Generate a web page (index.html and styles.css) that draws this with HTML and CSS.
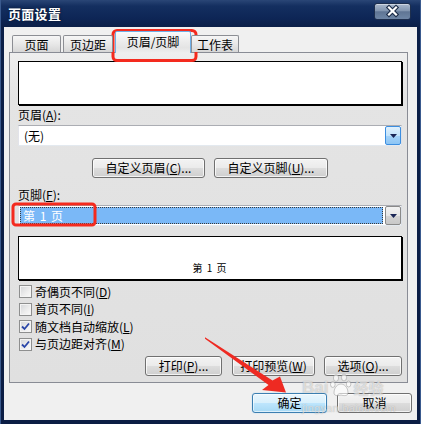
FILE: index.html
```html
<!DOCTYPE html>
<html lang="zh-CN">
<head>
<meta charset="utf-8">
<title>页面设置</title>
<link rel="stylesheet" href="styles.css">
</head>
<body>
<div class="window">
  <div class="titlebar">
    <span class="title">页面设置</span>
    <div class="close">
      <svg width="37" height="17" viewBox="0 0 37 17">
        <path d="M15 4.5 L22 11.5 M22 4.5 L15 11.5" stroke="#1b2b46" stroke-width="4.4" stroke-linecap="square" fill="none"/>
        <path d="M15 4.5 L22 11.5 M22 4.5 L15 11.5" stroke="#ffffff" stroke-width="2.2" stroke-linecap="square" fill="none"/>
      </svg>
    </div>
  </div>
  <div class="client">
    <div class="tabs">
      <div class="tab tab-1">页面</div>
      <div class="tab tab-2">页边距</div>
      <div class="tab tab-active">页眉/页脚</div>
      <div class="tab tab-4">工作表</div>
    </div>
    <div class="panel">
      <div class="preview"></div>
      <div class="label">页眉(<u>A</u>):</div>
      <div class="combo">
        <div class="combo-value">(无)</div>
        <div class="drop drop-hot">
          <svg width="7" height="4" viewBox="0 0 7 4"><path d="M0 0 H7 L3.5 4 Z" fill="#1a2656"/></svg>
        </div>
      </div>
      <div class="row-center">
        <button class="btn btn-custom-h">自定义页眉(<u>C</u>)...</button>
        <button class="btn btn-custom-f">自定义页脚(<u>U</u>)...</button>
      </div>
      <div class="label label-footer">页脚(<u>F</u>):</div>
      <div class="combo">
        <div class="combo-value combo-selected">第 1 页</div>
        <div class="drop">
          <svg width="7" height="4" viewBox="0 0 7 4"><path d="M0 0 H7 L3.5 4 Z" fill="#1a2656"/></svg>
        </div>
      </div>
      <div class="preview preview-footer"><span class="preview-text">第 1 页</span></div>
      <ul class="checks">
        <li class="check"><span class="box"></span><span>奇偶页不同(<u>D</u>)</span></li>
        <li class="check"><span class="box"></span><span>首页不同(<u>I</u>)</span></li>
        <li class="check"><span class="box"><svg width="11" height="11" viewBox="0 0 11 11"><path d="M2 5.5 L4.5 8 L9 2.5" stroke="#2a46a8" stroke-width="1.8" fill="none"/></svg></span><span>随文档自动缩放(<u>L</u>)</span></li>
        <li class="check"><span class="box"><svg width="11" height="11" viewBox="0 0 11 11"><path d="M2 5.5 L4.5 8 L9 2.5" stroke="#2a46a8" stroke-width="1.8" fill="none"/></svg></span><span>与页边距对齐(<u>M</u>)</span></li>
      </ul>
      <div class="row-right">
        <button class="btn btn-print">打印(<u>P</u>)...</button>
        <button class="btn btn-preview">打印预览(<u>W</u>)</button>
        <button class="btn btn-options">选项(<u>O</u>)...</button>
      </div>
    </div>
    <div class="dialog-buttons">
      <button class="btn btn-default">确定</button>
      <button class="btn btn-cancel">取消</button>
    </div>
  </div>

  <div class="watermark">
    <div class="wm-logo">
      <span class="wm-bai">Bai</span>
      <svg class="wm-paw" width="22" height="24" viewBox="0 0 22 24">
        <g fill="rgba(255,255,255,0.6)" stroke="rgba(110,110,110,0.45)" stroke-width="0.8">
          <ellipse cx="6" cy="5" rx="2.6" ry="3.4"/>
          <ellipse cx="14" cy="4.5" rx="2.6" ry="3.4"/>
          <ellipse cx="2.8" cy="11.5" rx="2.3" ry="3"/>
          <ellipse cx="18.6" cy="11" rx="2.3" ry="3"/>
          <path d="M4 20 C4 14 8 11 11 11 C14 11 18 14 18 20 C18 23 14 23 11 22 C8 23 4 23 4 20 Z"/>
        </g>
      </svg>
      <span class="wm-jy">经验</span>
    </div>
    <div class="wm-url">jingyan.baidu.com</div>
  </div>

  <svg class="annotations" width="421" height="424" viewBox="0 0 421 424">
    <rect x="113" y="30.5" width="83" height="30" rx="4" fill="none" stroke="#f42a1e" stroke-width="3"/>
    <rect x="13" y="204" width="82" height="21" rx="3" fill="none" stroke="#f42a1e" stroke-width="3"/>
    <polygon points="205,337.3 272.5,380.5 280,376.5 286,392.5 262,390 268.5,385 205,338.8" fill="#ee2a22"/>
  </svg>
</div>
</body>
</html>
```

FILE: styles.css
```css
* {
  box-sizing: border-box;
}

html, body {
  margin: 0;
  padding: 0;
}

body {
  width: 421px;
  height: 424px;
  overflow: hidden;
  font-family: "Noto Sans CJK SC", "Noto Sans", sans-serif;
  font-size: 12px;
  color: #000;
  background: #0c1d44;
}

.window {
  position: relative;
  width: 421px;
  height: 424px;
  display: flex;
  flex-direction: column;
  padding: 0 4px 4px 4px;
  background: linear-gradient(to bottom, #2a4676 0px, #142f60 6px, #0e2656 18px, #0b1f48 27px, #0b1d44 100%);
  box-shadow: inset 1px 0 0 #3a5a8e, inset -1px 0 0 #3a5a8e;
}

/* Title bar */
.titlebar {
  height: 27px;
  flex: none;
  display: flex;
  align-items: center;
  justify-content: space-between;
  padding-left: 4px;
}

.title {
  color: #fff;
  font-weight: 700;
  font-size: 13px;
  line-height: 16px;
  letter-spacing: 0.3px;
  text-shadow: 0 0 3px rgba(0, 0, 0, 0.6);
}

.close {
  align-self: flex-start;
  margin-top: 3px;
  margin-right: 6px;
  width: 37px;
  height: 17px;
  border: 1px solid #1e2f4d;
  border-radius: 3px;
  background: linear-gradient(to bottom, #a9b8cc 0%, #8396b0 45%, #5f7594 52%, #6e86a6 100%);
  box-shadow: inset 0 1px 0 rgba(255, 255, 255, 0.45);
  position: relative;
  overflow: hidden;
}

.close svg {
  position: absolute;
  left: -1px;
  top: -1px;
}

/* Client area */
.client {
  flex: 1;
  display: flex;
  flex-direction: column;
  background: #f0f0f0;
}

.tabs {
  display: flex;
  align-items: flex-end;
  height: 26px;
  padding: 4px 0 0 8px;
  margin-bottom: -1px;
  position: relative;
  z-index: 1;
}

.tab {
  height: 17px;
  margin-bottom: 1px;
  margin-right: 2px;
  border: 1px solid #8c8e94;
  border-bottom: none;
  border-radius: 2px 2px 0 0;
  background: linear-gradient(to bottom, #f6f6f6 0%, #e8e8e8 50%, #d6d6d6 100%);
  display: flex;
  align-items: center;
  justify-content: center;
  font-size: 12px;
  line-height: 14px;
  padding-top: 1px;
}

.tab-1 { width: 49px; }
.tab-2 { width: 50px; }
.tab-4 { width: 48px; margin-right: 0; }

.tab-active {
  width: 76px;
  height: 22px;
  margin-bottom: 0;
  margin-right: 0;
  border-color: #6fb0e8;
  background: linear-gradient(to bottom, #fafafa 0%, #ececec 45%, #e4e4e4 75%, #eeeeee 100%);
  padding-bottom: 2px;
}

.panel {
  margin: 0 9px 0 5px;
  border: 1px solid #898c95;
  background: linear-gradient(to bottom, #eeeeee 0px, #e4e4e4 45px, #e0e0e0 100%);
  padding: 0 5px 6px 8px;
  display: flex;
  flex-direction: column;
}

.preview {
  margin-top: 8px;
  height: 44px;
  background: #fff;
  border: 1px solid #000;
  box-shadow: 1px 1px 0 #000;
}

.preview-footer {
  margin-top: 10px;
  display: flex;
  align-items: flex-end;
  justify-content: center;
  padding-bottom: 5px;
}

.preview-text {
  font-size: 10px;
  line-height: 12px;
  letter-spacing: 1px;
  white-space: pre;
}

.label {
  margin-top: 2px;
  height: 16px;
  line-height: 16px;
  padding-left: 0;
}

.label-footer {
  margin-top: 9px;
}

.combo {
  margin-top: 2px;
  height: 21px;
  border: 1px solid #abadb3;
  border-left-color: #e2e3ea;
  border-right-color: #dbdfe6;
  border-bottom-color: #e3e9ef;
  background: #fff;
  display: flex;
  align-items: stretch;
  padding: 0;
}

.combo-value {
  flex: 1;
  line-height: 19px;
  padding-left: 5px;
  white-space: pre;
}

.combo-selected {
  margin: 1px 2px 1px 1px;
  line-height: 15px;
  padding-left: 2px;
  color: #fff;
  background: #7ab8f7;
  border: 1px dotted #3a3a3a;
  letter-spacing: 1px;
}

.drop {
  width: 16px;
  flex: none;
  border: 1px solid #8a8a8a;
  border-radius: 2px;
  background: linear-gradient(to bottom, #f3f3f3 0%, #e6e6e6 50%, #d4d4d4 51%, #c8c8c8 100%);
  display: flex;
  align-items: center;
  justify-content: center;
}

.drop-hot {
  border-color: #3c8ee0;
  background: linear-gradient(to bottom, #e0f1fd 0%, #c4e4fb 50%, #a5d3f8 51%, #8cc5f5 100%);
}

.row-center {
  margin-top: 12px;
  display: flex;
  justify-content: center;
  gap: 9px;
}

.row-right {
  margin-top: 3px;
  display: flex;
  justify-content: flex-end;
  gap: 9px;
  padding-right: 0;
}

.btn {
  font-family: "Noto Sans CJK SC", "Noto Sans", sans-serif;
  font-size: 12px;
  line-height: 16px;
  color: #000;
  height: 20px;
  padding: 0;
  margin: 0;
  border: 1px solid #707070;
  border-radius: 3px;
  background: linear-gradient(to bottom, #f3f3f3 0%, #ebebeb 48%, #dddddd 50%, #cfcfcf 100%);
  box-shadow: inset 0 0 0 1px rgba(255, 255, 255, 0.75);
  white-space: nowrap;
}

.btn-custom-h { width: 113px; }
.btn-custom-f { width: 114px; }
.btn-print { width: 77px; margin-right: 1px; }
.btn-preview { width: 83px; }
.btn-options { width: 78px; }

.checks {
  list-style: none;
  margin: 3px 0 0 0;
  padding: 0;
}

.check {
  height: 17.5px;
  display: flex;
  align-items: center;
  gap: 3px;
  padding-left: 1px;
  line-height: 16px;
}

.box {
  width: 13px;
  height: 13px;
  flex: none;
  border: 1px solid #8e8f8f;
  background: linear-gradient(135deg, #d3d5d8 0%, #eeeeee 60%, #fafafa 100%);
  box-shadow: inset 0 0 0 1px #f4f4f4;
  display: flex;
  align-items: center;
  justify-content: center;
}

.dialog-buttons {
  margin-top: 10px;
  display: flex;
  justify-content: flex-end;
  gap: 10px;
  padding-right: 5px;
}

.dialog-buttons .btn {
  width: 75px;
}

.btn-default {
  border-color: #3c7fb1;
  background: linear-gradient(to bottom, #eaf6fd 0%, #d9f0fc 48%, #bee6fd 50%, #a7d9f5 100%);
  box-shadow: inset 0 0 0 1px rgba(255, 255, 255, 0.6), 0 0 1px #7fbfef;
}

/* Overlays */
.watermark {
  position: absolute;
  left: 302px;
  top: 371px;
  pointer-events: none;
  color: rgba(255, 255, 255, 0.6);
  text-shadow: 0 0 1px rgba(100, 100, 100, 0.55);
}

.wm-logo {
  display: flex;
  align-items: flex-end;
  height: 26px;
}

.wm-bai {
  font-family: "Liberation Sans", sans-serif;
  font-weight: 700;
  font-size: 17px;
  line-height: 18px;
}

.wm-paw {
  margin: 0 1px 0 2px;
}

.wm-jy {
  font-size: 15px;
  line-height: 18px;
  font-weight: 700;
}

.wm-url {
  margin-top: 5px;
  font-family: "Liberation Sans", sans-serif;
  font-size: 11px;
  line-height: 12px;
  letter-spacing: 0.3px;
}

.annotations {
  position: absolute;
  left: 0;
  top: 0;
  pointer-events: none;
}
```
